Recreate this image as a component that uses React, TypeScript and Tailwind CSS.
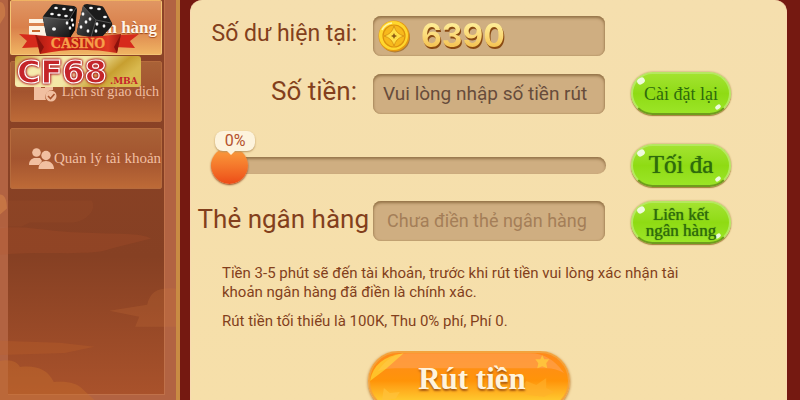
import { useState } from 'react';
import clsx from 'clsx';

const tabs = [
    { id: 'bank', label: 'Ngân hàng' },
    { id: 'history', label: 'Lịch sử giao dịch' },
    { id: 'account', label: 'Quản lý tài khoản' },
];

function TabIcon({ id }: { id: string }) {
    if (id === 'bank') {
        return (
            <svg viewBox="0 0 24 20" className="h-5 w-6 shrink-0" fill="#fdf3e3">
                <path d="M0 1h24v4H0zM0 8h24v11H0z" />
                <path d="M3 12h8v2H3z" fill="#c8682f" />
            </svg>
        );
    }
    if (id === 'history') {
        return (
            <svg viewBox="0 0 24 20" className="h-5 w-6 shrink-0" fill="#f1bfa0">
                <path d="M1 3h7v3h4V3h8v5a7 7 0 0 0-7 10H1z" />
                <circle cx="18" cy="14" r="5.5" />
                <path d="m15 14 2.5 2.5L21.500 12" fill="none" stroke="#a9552f" strokeWidth="1.6" />
            </svg>
        );
    }
    return (
        <svg viewBox="0 0 25 21" className="h-[21px] w-[25px] shrink-0" fill="#f1bfa0">
            <circle cx="7.500" cy="4.500" r="4.300" />
            <path d="M0 17c0-4 2-6 5-7h6l2 3-3 4z" />
            <circle cx="17" cy="7.500" r="4.700" />
            <path d="M9.500 21c0-5 3-8 7.500-8s8 3 8 8z" />
        </svg>
    );
}

function Clouds() {
    return (
        <svg className="absolute inset-0 h-full w-full" viewBox="0 0 177 400" preserveAspectRatio="none">
            <path d="M0 200h92c6 8-4 20-18 22H30l-8 4H0z" fill="#b0582f" opacity=".15" />
            <path d="M0 228c20-4 40 2 80 4s60 0 72 6l-40 10c-20 8-60 2-112 6z" fill="#b8562c" opacity=".2" />
            <path d="M177 288c-16-2-26 2-29 16l-38 6 30 6-4 10h41z" fill="#d17a3c" opacity=".2" />
            <path d="M0 340l60 2 35 4-30 6-65 2z" fill="#c0652c" opacity=".3" />
            <path d="M0 360c12-2 18 2 20 6 16-2 28 2 34 15 14-1 24 1 30 8l12 11H0z" fill="#c8702c" opacity=".4" />
            <path d="M0 2c4 0 6 6 5 14l-5 8zM0 194c5 0 7 6 7 14l-7 6z" fill="#d98a4a" opacity=".5" />
        </svg>
    );
}

function CasinoLogo() {
    return (
        <svg className="absolute top-0 left-3.5 h-[92px] w-[132px]" viewBox="14 0 132 92" role="img" aria-label="Casino CF68.MBA">
            <defs>
                <linearGradient id="ribbon" x1="0" x2="1">
                    <stop offset="0" stopColor="#a51a10" />
                    <stop offset=".2" stopColor="#d9271a" />
                    <stop offset=".5" stopColor="#b81a12" />
                    <stop offset=".85" stopColor="#e03a24" />
                    <stop offset="1" stopColor="#a51a10" />
                </linearGradient>
                <linearGradient id="plate" x1="0" x2="1" y2=".3">
                    <stop offset="0" stopColor="#c29a2c" />
                    <stop offset=".25" stopColor="#f6ecae" />
                    <stop offset=".6" stopColor="#f3e7a4" />
                    <stop offset=".85" stopColor="#c79f30" />
                    <stop offset="1" stopColor="#d9b94f" />
                </linearGradient>
                <linearGradient id="die" x1="0" y1="0" x2="1" y2="1">
                    <stop offset="0" stopColor="#5a5a5a" />
                    <stop offset="1" stopColor="#121212" />
                </linearGradient>
            </defs>

            {/* Dice */}
            <path d="M52 5q1-1 3-1l19 2q3 1 3 4l-2 20-6 8H50q-3 0-4-4l-3-15q-1-2 1-4z" fill="#1b1b1b" />
            <path d="M43 17l26 3 2 18H50q-3 0-4-4z" fill="url(#die)" />
            <path d="M69 20l7-12-1 22-5 8z" fill="#0c0c0c" />
            <path d="M43 17l26 3 7-12" fill="none" stroke="#6b6b6b" strokeWidth=".7" />
            <path d="M83 6q1-2 4-2l14 2q2 0 3 2l8 15q1 2-1 4l-10 11-22-3q-3-1-2-4z" fill="#1b1b1b" />
            <path d="M83 6l13 14-5 17-12-2q-3-1-2-4z" fill="url(#die)" />
            <path d="M83 6l13 14 15 3M96 20l-5 17" fill="none" stroke="#6b6b6b" strokeWidth=".7" />
            <g fill="#f4f4f4">
                <ellipse cx="56" cy="8" rx="1.800" ry="1.200" />
                <ellipse cx="64" cy="9" rx="1.800" ry="1.200" />
                <ellipse cx="71" cy="10" rx="1.800" ry="1.200" />
                <ellipse cx="52" cy="14" rx="1.800" ry="1.200" />
                <ellipse cx="59" cy="15" rx="1.800" ry="1.200" />
                <ellipse cx="66" cy="16" rx="1.800" ry="1.200" />
                <ellipse cx="54" cy="29" rx="2" ry="1.700" />
                <ellipse cx="67" cy="23" rx="1.300" ry="1.800" />
                <ellipse cx="72" cy="20" rx="1.300" ry="1.800" />
                <ellipse cx="70" cy="28" rx="1.300" ry="1.800" />
                <ellipse cx="73" cy="25" rx="1.200" ry="1.800" />
                <ellipse cx="91" cy="8" rx="1.900" ry="1.200" />
                <ellipse cx="99" cy="9" rx="1.900" ry="1.200" />
                <ellipse cx="105" cy="17" rx="1.900" ry="1.300" />
                <ellipse cx="83" cy="14" rx="1.400" ry="1.800" />
                <ellipse cx="90" cy="19" rx="1.400" ry="1.800" />
                <ellipse cx="86" cy="22" rx="1.400" ry="1.800" />
                <ellipse cx="81" cy="27" rx="1.400" ry="1.800" />
                <ellipse cx="88" cy="31" rx="1.400" ry="1.800" />
                <ellipse cx="97" cy="24" rx="1.400" ry="1.700" />
                <ellipse cx="104" cy="26" rx="1.400" ry="1.700" />
                <ellipse cx="96" cy="31" rx="1.400" ry="1.700" />
            </g>

            {/* Ribbon */}
            <path d="M19 34l18 1 6 12-21 1 5-7zM139 34l-18 1-6 12 20 1-5-7z" fill="#d62a1c" />
            <path d="M35 35q44 5 86-1l-4 19q-38-7-77 1z" fill="url(#ribbon)" />
            <path d="M36 35l4 19 4-7zM121 34l-4 19-3-6z" fill="#8a120c" />
            <text
                x="78"
                y="48"
                textAnchor="middle"
                fill="#f7a04a"
                stroke="#f7a04a"
                strokeWidth=".4"
                className="font-['Liberation_Serif',serif] text-[14px] font-bold"
            >
                CASINO
            </text>

            {/* Name plate */}
            <rect x="15" y="56" width="126" height="31" rx="3" fill="url(#plate)" />
            <text
                x="17"
                y="83"
                fill="#c4242a"
                stroke="#ffffff"
                strokeWidth="1.200"
                className="font-['DejaVu_Sans',sans-serif] text-[32px] font-bold [filter:drop-shadow(0_0_1px_#b01820)_drop-shadow(0_0_1px_#b01820)]"
            >
                CF68
            </text>
            <text x="110" y="84" fill="#c4242a" className="font-['DejaVu_Serif',serif] text-[9px] font-bold">
                .MBA
            </text>
        </svg>
    );
}

function Coin() {
    return (
        <svg viewBox="0 0 34 34" className="h-[34px] w-[34px] shrink-0">
            <ellipse cx="18" cy="18.500" rx="15" ry="15" fill="#8a5210" opacity=".6" />
            <circle cx="17" cy="17" r="15.500" fill="#e59a12" />
            <circle cx="16.500" cy="16.500" r="14.500" fill="#ffd72e" />
            <circle cx="17" cy="17" r="11" fill="#f7b91c" stroke="#dd920f" strokeWidth="1.200" />
            <path d="M17 7q2 8 10 10-8 2-10 10-2-8-10-10 8-2 10-10z" fill="#ffdf45" stroke="#d48c10" strokeWidth=".8" />
            <path d="M17 14l1 2 2 1-2 1-1 2-1-2-2-1 2-1z" fill="#8c5a16" />
            <path d="M5 11q3-6 10-7" stroke="#fff6a8" strokeWidth="1.500" fill="none" />
        </svg>
    );
}

function GreenButton({ className, children, onClick }: { className?: string; children: React.ReactNode; onClick?: () => void }) {
    return (
        <button
            type="button"
            onClick={onClick}
            className={clsx(
                "relative flex h-[43px] w-[100px] items-center justify-center rounded-full border-2 border-[#b5e860] border-b-[#6f9c1c] bg-linear-to-b from-[#a3e32f] via-[#8fdb13] to-[#9be526] font-['Liberation_Serif',serif] whitespace-nowrap text-[#2f6b0c] shadow-[0_1px_1px_#a5803e,0_0_2px_#a98b45]",
                className,
            )}
        >
            <span className="absolute top-1 left-1 h-1.5 w-2 -rotate-35 rounded-full bg-white/85"></span>
            <span className="absolute right-2 bottom-1 h-1 w-1.5 -rotate-35 rounded-full bg-white/85"></span>
            <span className="relative">{children}</span>
        </button>
    );
}

export default function App() {
    const [active, setActive] = useState('bank');
    const [amount, setAmount] = useState('');
    const [card, setCard] = useState('');
    const [percent, setPercent] = useState(0);

    const field = 'block h-10 w-full rounded-lg bg-[#cfae81] shadow-[inset_0_2px_3px_#947348,inset_0_0_2px_#a58456]';

    return (
        <div className="flex min-h-screen overflow-hidden bg-[#751911] font-[Roboto,sans-serif]">
            {/* Sidebar */}
            <aside className="relative flex w-[180px] shrink-0 border-r-4 border-[#c98b43] bg-[#b26342] pr-3 pb-1.5 pl-2">
                <nav className="flex-1 border-r border-b border-[#c0714a] bg-linear-to-b from-[#8d4428] via-[#864023] via-65% to-[#a9522b]">
                    <Clouds />
                    <ul className="relative flex flex-col gap-1.5 px-0.5">
                        {tabs.map((tab) => (
                            <li key={tab.id}>
                                <button
                                    type="button"
                                    onClick={() => setActive(tab.id)}
                                    className={clsx(
                                        "flex w-full items-center justify-between overflow-hidden rounded-xs border pl-[18px] font-['Liberation_Serif',serif] whitespace-nowrap",
                                        tab.id === 'bank' && 'h-[55px] pr-1 text-[17px]',
                                        tab.id === 'history' && 'h-[61px] pr-0.5 pl-[22px] text-sm',
                                        tab.id === 'account' && 'h-[61px] text-[15px]',
                                        active === tab.id
                                            ? 'border-[#f3c473] border-t-transparent bg-linear-to-b from-[#e09663] via-[#d9804b] to-[#f0b463] font-bold text-[#fff5e8] text-shadow-[0_1px_1px_#a04a1c]'
                                            : 'border-[#b66b3d] bg-linear-to-b from-[#a96237] via-[#a3542f] to-[#bd6a37] text-[#f1bfa0]',
                                    )}
                                >
                                    <TabIcon id={tab.id} />
                                    <span>{tab.label}</span>
                                </button>
                            </li>
                        ))}
                    </ul>
                </nav>
                <CasinoLogo />
            </aside>

            {/* Withdraw form */}
            <main className="mr-[13px] ml-2.5 flex-1 rounded-t-xl border-x border-[#f9d9b0] bg-linear-to-b from-[#f5dfae] to-[#f6dfa9] pt-4 text-[#833f1c]">
                <form onSubmit={(e) => e.preventDefault()}>
                    <div className="flex h-10 items-center gap-4 pl-1">
                        <span className="w-[162px] pb-1 text-right text-[23px] whitespace-nowrap">Số dư hiện tại:</span>
                        <output className="flex h-10 w-[232px] items-center gap-2.5 rounded-lg bg-[#cfae81] pl-1 shadow-[inset_0_2px_3px_#947348,inset_0_0_2px_#a58456]">
                            <Coin />
                            <span className="bg-linear-to-b from-[#fff3a0] via-[#fbd977] to-[#f0b73c] bg-clip-text font-[Inter,sans-serif] text-[32px] leading-none font-bold text-transparent drop-shadow-[1px_2px_0_#8a4a12]">
                                6390
                            </span>
                        </output>
                    </div>

                    <div className="mt-4 flex items-center gap-4 pl-1">
                        <label htmlFor="amount" className="w-[162px] pb-1 text-right text-[26px] whitespace-nowrap">
                            Số tiền:
                        </label>
                        <div className="w-[232px]">
                            <input
                                id="amount"
                                type="text"
                                value={amount}
                                onChange={(e) => setAmount(e.target.value)}
                                placeholder="Vui lòng nhập số tiền rút"
                                className={clsx(field, 'px-2.5 text-[19px] text-[#674c3b] outline-none placeholder:text-[#674c3b]')}
                            />
                        </div>
                        <GreenButton className="ml-2.5 text-lg" onClick={() => setAmount('')}>
                            Cài đặt lại
                        </GreenButton>
                    </div>

                    <div className="mt-7 flex items-center gap-[25px] pl-5">
                        <div className="relative flex h-11 w-[395px] items-center">
                            <input
                                type="range"
                                aria-label="Tỷ lệ rút"
                                min={0}
                                max={100}
                                value={percent}
                                onChange={(e) => setPercent(Number(e.target.value))}
                                className="h-[17px] w-full appearance-none rounded-full bg-[#cfae81] shadow-[inset_0_2px_3px_#947348] [&::-webkit-slider-thumb]:h-[37px] [&::-webkit-slider-thumb]:w-[37px] [&::-webkit-slider-thumb]:appearance-none [&::-webkit-slider-thumb]:rounded-full [&::-webkit-slider-thumb]:bg-linear-to-b [&::-webkit-slider-thumb]:from-[#fba03e] [&::-webkit-slider-thumb]:to-[#ec4a17] [&::-webkit-slider-thumb]:shadow-[0_1px_2px_#96461c]"
                            />
                            <output
                                className="absolute -top-3 ml-1 w-10 rounded-lg bg-[#fdf3dc] text-center text-base leading-5 text-[#b4512c] shadow-[0_1px_2px_#b99560]"
                                style={{ left: `calc((100% - 37px) * ${percent / 100})` }}
                            >
                                {percent}%
                                <span className="absolute top-full left-3 border-x-4 border-t-4 border-x-transparent border-t-[#fdf3dc]"></span>
                            </output>
                        </div>
                        <GreenButton className="text-[25px] text-shadow-[0_0_1px_#2f6b0c]" onClick={() => setPercent(100)}>
                            Tối đa
                        </GreenButton>
                    </div>

                    <div className="mt-3.5 flex items-start gap-1 pl-1">
                        <label htmlFor="card" className="w-[174px] text-right text-[26px] leading-9 whitespace-nowrap">
                            Thẻ ngân hàng
                        </label>
                        <div className="w-[232px]">
                            <input
                                id="card"
                                type="text"
                                value={card}
                                onChange={(e) => setCard(e.target.value)}
                                placeholder="Chưa điền thẻ ngân hàng"
                                className={clsx(field, 'px-3.5 pb-0.5 text-lg text-[#674c3b] outline-none placeholder:text-[#a47e58]')}
                            />
                        </div>
                        <GreenButton className="ml-[22px] text-[17px] leading-4 text-shadow-[0_0_1px_#2f6b0c]">
                            <span className="block">Liên kết</span>
                            <span className="block">ngân hàng</span>
                        </GreenButton>
                    </div>

                    <div className="mt-5 max-w-[520px] pl-[31px] text-[15px] leading-[19px]">
                        <p>Tiền 3-5 phút sẽ đến tài khoản, trước khi rút tiền vui lòng xác nhận tài khoản ngân hàng đã điền là chính xác.</p>
                        <p className="mt-2.5">Rút tiền tối thiểu là 100K, Thu 0% phí, Phí 0.</p>
                    </div>

                    <div className="mt-5 h-[50px] overflow-hidden pl-[177px]">
                        <button
                            type="submit"
                            className="relative flex h-[60px] w-[202px] justify-center overflow-hidden rounded-full border-2 border-[#f3a23c] bg-linear-to-b from-[#ff8a1a] via-[#ff9408] to-[#ffdf3a] pt-2.5 pl-1.5 shadow-[0_1px_3px_#b06a20]"
                        >
                            <svg viewBox="0 0 200 56" className="absolute inset-0 h-full w-full">
                                <path d="M8 18Q20 0 38 0h124q20 0 34 20-8-5-18-5H26Q14 15 8 18z" fill="#ffa55c" opacity=".55" />
                                <path d="M0 28Q4 4 34 0L16 16z" fill="#ffe23c" opacity=".6" />
                                <path d="M174 2l2 4 5 0-3 4 1 5-5-2-5 2 1-5-3-4 5 0z" fill="#ffc23c" />
                                <path d="M158 28l10 4 10-7v10l8 4-10 5-18-2-6-8z" fill="#ffb02c" opacity=".6" />
                                <path d="M14 35l6 5 10-1-4 7-14 2z" fill="#ffc23c" opacity=".7" />
                            </svg>
                            <span className="relative font-['Liberation_Serif',serif] text-[31px] leading-8 font-bold text-[#fff3dc] text-shadow-[0_2px_2px_#a85a10]">
                                Rút tiền
                            </span>
                        </button>
                    </div>
                </form>
            </main>
        </div>
    );
}
